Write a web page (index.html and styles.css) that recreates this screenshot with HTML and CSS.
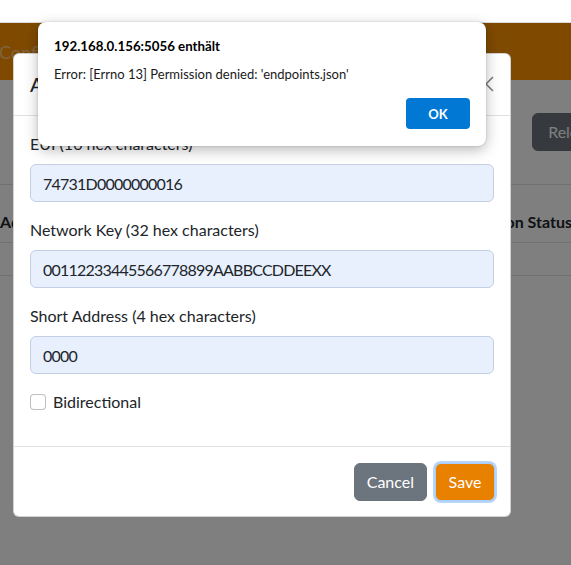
FILE: index.html
```html
<!DOCTYPE html>
<html lang="en">
<head>
<meta charset="utf-8">
<title>Endpoints</title>
<link rel="stylesheet" href="styles.css">
</head>
<body>
<div class="chrome"></div>
<div class="page">
  <nav class="navbar"><span class="brand">Configuration</span></nav>
  <div class="toolbar"><button class="btn btn-secondary btn-reload">Reload</button></div>
  <div class="table">
    <div class="thead"><span class="th">Address</span><span class="th">Connection Status</span></div>
    <div class="trow"></div>
  </div>
</div>
<div class="backdrop"></div>
<div class="modal">
  <div class="modal-header">
    <h5 class="modal-title">Add Endpoint</h5>
    <button class="btn-close" aria-label="Close">
      <svg width="16" height="16" viewBox="0 0 16 16"><path d="M1 1L15 15M15 1L1 15" stroke="#000" stroke-width="1.6" fill="none"/></svg>
    </button>
  </div>
  <div class="modal-body">
    <div class="field">
      <label class="form-label">EUI (16 hex characters)</label>
      <input class="form-control" value="74731D0000000016">
    </div>
    <div class="field">
      <label class="form-label">Network Key (32 hex characters)</label>
      <input class="form-control" value="00112233445566778899AABBCCDDEEXX">
    </div>
    <div class="field">
      <label class="form-label">Short Address (4 hex characters)</label>
      <input class="form-control" value="0000">
    </div>
    <div class="form-check">
      <span class="check-box"></span>
      <label class="check-label">Bidirectional</label>
    </div>
  </div>
  <div class="modal-footer">
    <button class="btn btn-secondary">Cancel</button>
    <button class="btn btn-save">Save</button>
  </div>
</div>
<div class="alert-dialog">
  <div class="alert-title">192.168.0.156:5056 enthält</div>
  <div class="alert-msg">Error: [Errno 13] Permission denied: 'endpoints.json'</div>
  <div class="alert-actions"><button class="alert-ok">OK</button></div>
</div>
</body>
</html>
```

FILE: styles.css
```css
html, body {
  margin: 0;
  padding: 0;
}
body {
  width: 571px;
  height: 565px;
  overflow: hidden;
  position: relative;
  background: #fff;
  font-family: "Segoe UI", Lato, "Open Sans", sans-serif;
  font-size: 16px;
  line-height: 1.5;
  color: #212529;
}
.chrome {
  height: 22px;
  background: #fff;
  border-bottom: 1px solid #dcdcdc;
}
.page {
  height: 542px;
  background: #fff;
}
.navbar {
  height: 57px;
  background: #ff9400;
  display: flex;
  align-items: center;
}
.brand {
  font-size: 18px;
  color: rgba(255, 255, 255, 0.5);
  margin-left: -1px;
  margin-top: 2px;
}
.toolbar {
  width: 612px;
  display: flex;
  justify-content: flex-end;
  margin-top: 33px;
}
.btn {
  font-family: inherit;
  font-size: 16px;
  line-height: 24px;
  padding: 6px 12px;
  border: 1px solid transparent;
  border-radius: 6px;
  color: #fff;
}
.btn-secondary {
  background: #6c757d;
  border-color: #6c757d;
}
.btn-reload {
  width: 80px;
}
.table {
  margin-top: 33px;
  width: 572px;
}
.thead {
  height: 57px;
  border-top: 1px solid #dee2e6;
  border-bottom: 1px solid #dee2e6;
  display: flex;
  justify-content: space-between;
  align-items: flex-end;
}
.th {
  font-weight: 700;
  padding-bottom: 8px;
}
.trow {
  height: 32px;
  border-bottom: 1px solid #dee2e6;
}
.backdrop {
  position: absolute;
  left: 0;
  top: 23px;
  right: 0;
  bottom: 0;
  background: rgba(0, 0, 0, 0.5);
}
.modal {
  position: absolute;
  left: 13px;
  top: 53px;
  width: 498px;
  box-sizing: border-box;
  background: #fff;
  border: 1px solid rgba(0, 0, 0, 0.175);
  border-radius: 6px;
}
.modal-header {
  display: flex;
  align-items: center;
  padding: 15px 16px 16px;
  border-bottom: 1px solid #dee2e6;
}
.modal-title {
  margin: 0;
  font-size: 20px;
  font-weight: 500;
  line-height: 30px;
  flex: 1;
}
.btn-close {
  width: 32px;
  height: 32px;
  margin: -8px -8px -8px auto;
  padding: 8px;
  border: 0;
  background: transparent;
  opacity: 0.5;
  display: flex;
}
.modal-body {
  padding: 16px 16px 0;
}
.field {
  margin-bottom: 16px;
}
.form-label {
  display: block;
  margin-bottom: 8px;
}
.form-control {
  display: block;
  width: 100%;
  box-sizing: border-box;
  height: 38px;
  padding: 6px 12px;
  font-family: inherit;
  font-size: 16px;
  letter-spacing: -0.78px;
  color: #212529;
  background: #e8f0fe;
  border: 1px solid #c3cfe2;
  border-radius: 6px;
  outline: none;
}
.form-check {
  display: flex;
  align-items: center;
  gap: 8px;
  margin-bottom: 32px;
}
.check-box {
  width: 16px;
  height: 16px;
  box-sizing: border-box;
  border: 1px solid rgba(0, 0, 0, 0.25);
  border-radius: 4px;
  background: #fff;
}
.check-label {
  margin-left: -1px;
}
.modal-footer {
  display: flex;
  justify-content: flex-end;
  gap: 8px;
  padding: 16px 15px 15px 16px;
  border-top: 1px solid #dee2e6;
}
.btn-save {
  background: #e88000;
  border-color: #a9cdfb;
  box-shadow: 0 0 0 2px #b6d6fc;
  min-width: 60px;
}
.alert-dialog {
  position: absolute;
  left: 38px;
  top: 22px;
  width: 448px;
  height: 124px;
  box-sizing: border-box;
  background: #fff;
  border-radius: 8px;
  box-shadow: 0 4px 14px rgba(0, 0, 0, 0.28), 0 0 2px rgba(0, 0, 0, 0.2);
  padding: 14px 16px 17px;
  display: flex;
  flex-direction: column;
}
.alert-title {
  font-size: 13.3px;
  font-weight: 700;
  line-height: 20px;
  color: #000;
}
.alert-msg {
  font-size: 13px;
  line-height: 18px;
  color: #1a1a1a;
  margin-top: 9px;
}
.alert-actions {
  margin-top: auto;
  display: flex;
  justify-content: flex-end;
}
.alert-ok {
  width: 64px;
  height: 31px;
  border: 0;
  border-radius: 4px;
  background: #0078d4;
  color: #fff;
  font-family: inherit;
  font-size: 13px;
  font-weight: 700;
}
```
